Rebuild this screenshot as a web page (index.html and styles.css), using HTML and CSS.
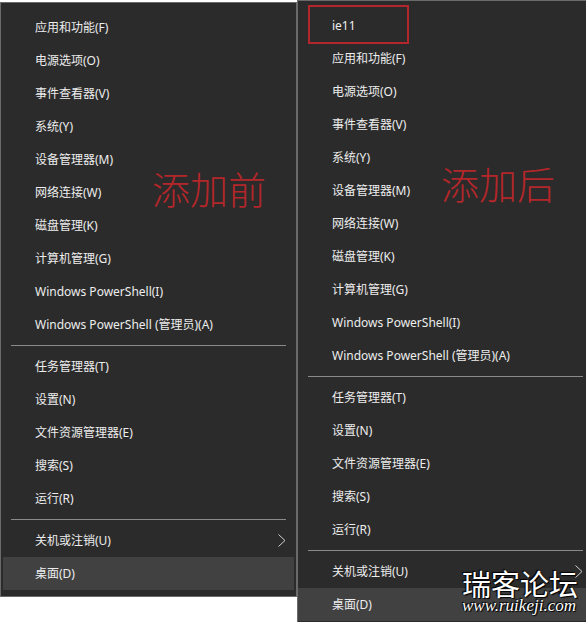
FILE: index.html
```html
<!DOCTYPE html>
<html lang="zh-CN">
<head>
    <meta charset="UTF-8">
    <meta name="viewport" content="width=device-width, initial-scale=1.0">
    <title>Win+X 菜单 添加前后</title>
    <link rel="stylesheet" href="styles.css">
</head>
<body>
    <div class="screens">
        <div class="menu menu-before">
            <div class="item">应用和功能(F)</div>
            <div class="item">电源选项(O)</div>
            <div class="item">事件查看器(V)</div>
            <div class="item">系统(Y)</div>
            <div class="item">设备管理器(M)</div>
            <div class="item">网络连接(W)</div>
            <div class="item">磁盘管理(K)</div>
            <div class="item">计算机管理(G)</div>
            <div class="item">Windows PowerShell(I)</div>
            <div class="item">Windows PowerShell (管理员)(A)</div>
            <div class="sep"></div>
            <div class="item">任务管理器(T)</div>
            <div class="item">设置(N)</div>
            <div class="item">文件资源管理器(E)</div>
            <div class="item">搜索(S)</div>
            <div class="item">运行(R)</div>
            <div class="sep"></div>
            <div class="item">关机或注销(U)
                <svg class="chev" width="8" height="13" viewBox="0 0 8 13"><polyline points="0.5,0.5 7,6.5 0.5,12.5" fill="none" stroke="#cfcfcf" stroke-width="1"/></svg>
            </div>
            <div class="item active">桌面(D)</div>

            <div class="label label-before">添加前</div>
        </div>

        <div class="menu menu-after">
            <div class="item">ie11</div>
            <div class="item">应用和功能(F)</div>
            <div class="item">电源选项(O)</div>
            <div class="item">事件查看器(V)</div>
            <div class="item">系统(Y)</div>
            <div class="item">设备管理器(M)</div>
            <div class="item">网络连接(W)</div>
            <div class="item">磁盘管理(K)</div>
            <div class="item">计算机管理(G)</div>
            <div class="item">Windows PowerShell(I)</div>
            <div class="item">Windows PowerShell (管理员)(A)</div>
            <div class="sep"></div>
            <div class="item">任务管理器(T)</div>
            <div class="item">设置(N)</div>
            <div class="item">文件资源管理器(E)</div>
            <div class="item">搜索(S)</div>
            <div class="item">运行(R)</div>
            <div class="sep"></div>
            <div class="item">关机或注销(U)
                <svg class="chev" width="8" height="13" viewBox="0 0 8 13"><polyline points="0.5,0.5 7,6.5 0.5,12.5" fill="none" stroke="#cfcfcf" stroke-width="1"/></svg>
            </div>
            <div class="item active">桌面(D)</div>

            <div class="mark-box"></div>
            <div class="label label-after">添加后</div>
        </div>
    </div>

    <div class="watermark">
        <div class="wm-name">瑞客论坛</div>
        <div class="wm-url">www.ruikeji.com</div>
    </div>
</body>
</html>
```

FILE: styles.css
```css
body {
    margin: 0;
    padding: 0;
    width: 586px;
    height: 622px;
    overflow: hidden;
    background-color: #ffffff;
    font-family: 'Noto Sans', 'Noto Sans CJK SC', sans-serif;
    position: relative;
}
.screens {
    display: flex;
    align-items: flex-start;
    width: 594px;
}
.menu {
    position: relative;
    flex: none;
    width: 297px;
    box-sizing: border-box;
    background: #2b2b2b;
    border: 1px solid #6a6a6a;
    padding: 8px 2px 6px 2px;
    color: #ededed;
    font-size: 12px;
}
.menu-before {
    margin-top: 2px;
}
.menu-after {
    margin-top: 0;
    padding-bottom: 20px;
}
.item {
    height: 33px;
    line-height: 33px;
    padding: 0 8px 0 32px;
    display: flex;
    align-items: center;
    justify-content: space-between;
    white-space: nowrap;
}
.item.active {
    background: #414141;
}
.menu-after .item.active {
    margin-left: -2px;
    padding-left: 34px;
}
.chev {
    display: block;
}
.sep {
    height: 1px;
    margin: 4px 8px;
    background: #8a8a8a;
}
.label {
    position: absolute;
    font-family: 'Noto Sans CJK SC', serif;
    font-weight: 300;
    font-size: 38px;
    line-height: 1;
    color: #b3272a;
    white-space: nowrap;
}
.label-before {
    left: 151px;
    top: 166px;
}
.label-after {
    left: 143px;
    top: 163px;
}
.mark-box {
    position: absolute;
    left: 10px;
    top: 4px;
    width: 97px;
    height: 35px;
    border: 2px solid #b3262b;
}
.watermark {
    position: absolute;
    left: 462px;
    top: 568px;
    color: #ffffff;
    text-shadow: 0 0 1px #000, 1px 1px 1px #000, -1px -1px 1px #000;
}
.wm-name {
    font-family: 'Noto Sans CJK SC', sans-serif;
    font-size: 29px;
    line-height: 30px;
    white-space: nowrap;
}
.wm-url {
    font-family: 'Liberation Serif', serif;
    font-style: italic;
    font-size: 17px;
    line-height: 16px;
    white-space: nowrap;
}
```
